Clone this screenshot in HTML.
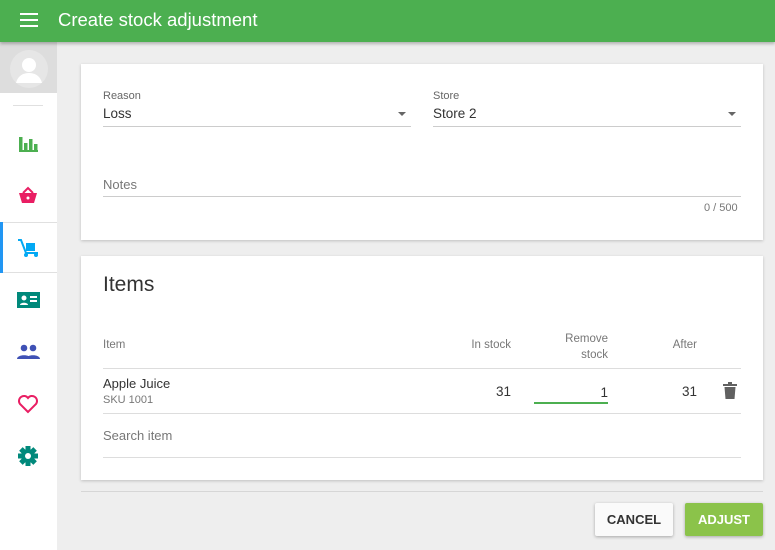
<!DOCTYPE html>
<html><head><style>
*{margin:0;padding:0;box-sizing:border-box}
body{width:775px;height:550px;overflow:hidden;background:#eeeeee;font-family:"Liberation Sans",sans-serif;position:relative;color:#333}
.hdr{position:absolute;left:0;top:0;width:775px;height:42px;background:#4caf50;box-shadow:0 2px 3px rgba(0,0,0,.25);z-index:2}
.hdr .t{position:absolute;left:58px;top:9px;font-size:18.5px;color:#fff}
.side{position:absolute;left:0;top:42px;width:57px;height:508px;background:#fff}
.av{position:absolute;left:0;top:0;width:57px;height:51px;background:#ddd}
.ic{position:absolute;left:17px}
.card{position:absolute;left:81px;width:682px;background:#fff;box-shadow:0 1px 3px rgba(0,0,0,.2)}
.lbl{position:absolute;font-size:11px;color:#666}
.val{position:absolute;font-size:13.5px;color:#333}
.ln{position:absolute;height:1px;background:#ddd}
.arr{position:absolute;width:0;height:0;border-left:4px solid transparent;border-right:4px solid transparent;border-top:4px solid #666}
.th{position:absolute;font-size:11.5px;color:#777;text-align:right}
.btn{position:absolute;top:503px;height:33px;font-size:13px;font-weight:bold;text-align:center;line-height:33px;box-shadow:0 1px 3px rgba(0,0,0,.3);border-radius:2px}
</style></head><body>
<div class="hdr">
<svg style="position:absolute;left:20px;top:13px" width="18" height="14"><rect y="0" width="18" height="2" fill="#fff"/><rect y="6" width="18" height="2" fill="#fff"/><rect y="12" width="18" height="2" fill="#fff"/></svg>
<div class="t">Create stock adjustment</div></div>
<div class="side">
<div class="av"><svg style="position:absolute;left:10px;top:8px" width="38" height="38"><circle cx="19" cy="19" r="19" fill="#e6e6e6"/><circle cx="19" cy="15" r="7" fill="#fff"/><path d="M6 33c2-8 8-10 13-10s11 2 13 10z" fill="#fff"/></svg></div>
<div class="ln" style="left:13px;top:63px;width:30px;background:#e0e0e0"></div>
<svg class="ic" style="top:93px" width="22" height="18"><g fill="#4caf50"><rect x="2" y="2" width="3.5" height="15"/><rect x="7" y="8" width="3.5" height="9"/><rect x="12" y="4" width="3.5" height="13"/><rect x="17" y="9" width="3.5" height="8"/><rect x="2" y="15" width="19" height="2"/></g></svg>
<svg class="ic" style="top:144px" width="22" height="20"><path d="M2 7h18l-3 10H5z" fill="#e91e63"/><path d="M6 7l5-5 5 5" stroke="#e91e63" stroke-width="2" fill="none"/><circle cx="11" cy="12" r="1.5" fill="#fff"/></svg>
<div style="position:absolute;left:0;top:180px;width:57px;height:51px;border-top:1px solid #e0e0e0;border-bottom:1px solid #e0e0e0"></div>
<div style="position:absolute;left:0;top:180px;width:3px;height:51px;background:#2196f3"></div>
<svg class="ic" style="top:196px" width="24" height="20"><path d="M1 2h3l5 13h12" stroke="#03a9f4" stroke-width="2" fill="none"/><rect x="9" y="5" width="9" height="8" fill="#03a9f4"/><circle cx="9" cy="17" r="2" fill="#03a9f4"/><circle cx="19" cy="17" r="2" fill="#03a9f4"/></svg>
<svg class="ic" style="top:250px" width="23" height="16"><rect width="23" height="16" fill="#00897b"/><circle cx="7" cy="6" r="2.5" fill="#fff"/><path d="M3 13c0-3 8-3 8 0z" fill="#fff"/><rect x="13" y="4" width="7" height="2" fill="#fff"/><rect x="13" y="8" width="7" height="2" fill="#fff"/></svg>
<svg class="ic" style="top:302px" width="23" height="16"><g fill="#3f51b5"><circle cx="7" cy="4" r="3.3"/><circle cx="16" cy="4" r="3.3"/><path d="M0 15c0-5 14-5 14 0z"/><path d="M9 15c0-5 14-5 14 0z"/></g></svg>
<svg class="ic" style="top:352px" width="22" height="20"><path d="M11 18L3 10a4.5 4.5 0 0 1 8-6 4.5 4.5 0 0 1 8 6z" stroke="#e91e63" stroke-width="2" fill="none"/></svg>
<svg class="ic" style="top:403px" width="22" height="22"><g fill="#00897b" transform="translate(11 11)"><circle r="7"/><rect x="-2.5" y="-10" width="5" height="20"/><rect x="-2.5" y="-10" width="5" height="20" transform="rotate(45)"/><rect x="-2.5" y="-10" width="5" height="20" transform="rotate(90)"/><rect x="-2.5" y="-10" width="5" height="20" transform="rotate(135)"/></g><circle cx="11" cy="11" r="3" fill="#fff"/></svg>
</div>

<div class="card" style="top:64px;height:176px">
<div class="lbl" style="left:22px;top:26px">Reason</div>
<div class="val" style="left:22px;top:42px">Loss</div>
<div class="arr" style="left:317px;top:48px"></div>
<div class="ln" style="left:22px;top:62px;width:308px;background:#ccc"></div>
<div class="lbl" style="left:352px;top:26px">Store</div>
<div class="val" style="left:352px;top:42px">Store 2</div>
<div class="arr" style="left:647px;top:48px"></div>
<div class="ln" style="left:352px;top:62px;width:308px;background:#ccc"></div>
<div class="val" style="left:22px;top:113px;color:#777;font-size:13px">Notes</div>
<div class="ln" style="left:22px;top:132px;width:638px;background:#ccc"></div>
<div class="lbl" style="left:623px;top:138px;color:#777">0 / 500</div>
</div>

<div class="card" style="top:256px;height:224px">
<div style="position:absolute;left:22px;top:17px;font-size:21px;color:#333">Items</div>
<div class="th" style="left:22px;top:83px;text-align:left">Item</div>
<div class="th" style="left:370px;top:83px;width:60px">In stock</div>
<div class="th" style="left:460px;top:75px;width:67px;line-height:16px">Remove<br>stock</div>
<div class="th" style="left:570px;top:83px;width:46px">After</div>
<div class="ln" style="left:22px;top:112px;width:638px"></div>
<div class="val" style="left:22px;top:120px;font-size:13px">Apple Juice</div>
<div class="lbl" style="left:22px;top:138px;color:#777">SKU 1001</div>
<div class="val" style="left:370px;top:128px;width:60px;text-align:right">31</div>
<div class="val" style="left:460px;top:129px;width:67px;text-align:right">1</div>
<div style="position:absolute;left:453px;top:146px;width:74px;height:2px;background:#4caf50"></div>
<div class="val" style="left:570px;top:128px;width:46px;text-align:right">31</div>
<svg style="position:absolute;left:642px;top:126px" width="14" height="18"><rect x="0" y="2" width="14" height="2" fill="#616161"/><rect x="5" y="0" width="4" height="2" fill="#616161"/><path d="M1.5 5h11l-1 12h-9z" fill="#616161"/></svg>
<div class="ln" style="left:22px;top:157px;width:638px"></div>
<div class="val" style="left:22px;top:172px;color:#777;font-size:13px">Search item</div>
<div class="ln" style="left:22px;top:201px;width:638px"></div>
</div>
<div class="ln" style="left:81px;top:491px;width:682px;background:#d6d6d6"></div>
<div class="btn" style="left:595px;width:78px;background:#fafafa;color:#333">CANCEL</div>
<div class="btn" style="left:685px;width:78px;background:#8bc34a;color:#fff">ADJUST</div>
</body></html>
